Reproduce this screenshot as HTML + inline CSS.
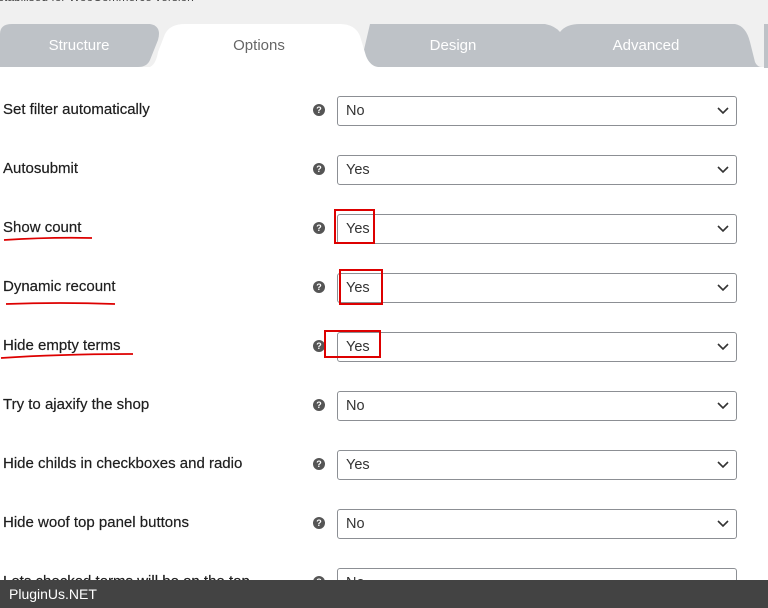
<!DOCTYPE html>
<html><head><meta charset="utf-8"><style>
body{margin:0;width:768px;height:608px;overflow:hidden;background:#fff;font-family:"Liberation Sans",sans-serif;position:relative}
.top{position:absolute;left:0;top:0;width:768px;height:67px;background:#f0f0f0}
.lbl{position:absolute;left:3px;font-size:15px;color:#1e1e1e;line-height:16px;-webkit-text-stroke:0.2px #1e1e1e}
.q{position:absolute;left:313px;width:12px;height:12px;border-radius:50%;background:#555;color:#fff;font-size:9px;font-weight:bold;text-align:center;line-height:12px}
.sel{position:absolute;left:337px;width:398px;height:28px;border:1px solid #8c8f94;border-radius:3px;background:#fff;font-size:14.5px;color:#333;line-height:28px;box-sizing:content-box}
.sel span{position:absolute;left:8px}
.sel svg{position:absolute;right:7px;top:10px}
.red{position:absolute;border:2px solid #d00;box-sizing:border-box}
.foot{position:absolute;left:0;top:580px;width:768px;height:28px;background:#434343;color:#fff;font-size:14px;line-height:28px;padding-left:9px;box-sizing:border-box}
</style></head><body>
<div class="top"></div>
<div style="position:absolute;left:-2px;top:-10px;font-size:12px;color:#444">stabilised for WooCommerce version</div>
<svg style="position:absolute;left:0;top:0" width="768" height="68">
<path d="M0 34 Q0 24 12 24 L150 24 Q162 26 158 40 L150 60 Q147 67 138 67 L0 67Z" fill="#bec2c7"/>
<path d="M370 24 L545 24 Q555 26 560 32 Q566 24 580 24 L735 24 Q746 26 750 42 L755 62 Q757 67 762 67 L360 67Z" fill="#bec2c7"/>
<rect x="764" y="24" width="4" height="44" fill="#bec2c7"/>
<path d="M150 67 Q156 64 158 52 L165 34 Q170 24 185 24 L340 24 Q355 24 360 36 L366 56 Q370 66 378 67Z" fill="#fff"/>
<text x="79" y="50" fill="#fff" font-size="15" text-anchor="middle" font-family="Liberation Sans">Structure</text>
<text x="259" y="50" fill="#666" font-size="15" text-anchor="middle" font-family="Liberation Sans">Options</text>
<text x="453" y="50" fill="#fff" font-size="15" text-anchor="middle" font-family="Liberation Sans">Design</text>
<text x="646" y="50" fill="#fff" font-size="15" text-anchor="middle" font-family="Liberation Sans">Advanced</text>
</svg>

<div class="lbl" style="top:102px">Set filter automatically</div><div class="q" style="top:104px">?</div><div class="sel" style="top:96px"><span>No</span><svg width="12" height="8"><path d="M1 1 L6 6 L11 1" stroke="#333" stroke-width="1.6" fill="none"/></svg></div>
<div class="lbl" style="top:161px">Autosubmit</div><div class="q" style="top:163px">?</div><div class="sel" style="top:155px"><span>Yes</span><svg width="12" height="8"><path d="M1 1 L6 6 L11 1" stroke="#333" stroke-width="1.6" fill="none"/></svg></div>
<div class="lbl" style="top:220px">Show count</div><div class="q" style="top:222px">?</div><div class="sel" style="top:214px"><span>Yes</span><svg width="12" height="8"><path d="M1 1 L6 6 L11 1" stroke="#333" stroke-width="1.6" fill="none"/></svg></div>
<div class="lbl" style="top:279px">Dynamic recount</div><div class="q" style="top:281px">?</div><div class="sel" style="top:273px"><span>Yes</span><svg width="12" height="8"><path d="M1 1 L6 6 L11 1" stroke="#333" stroke-width="1.6" fill="none"/></svg></div>
<div class="lbl" style="top:338px">Hide empty terms</div><div class="q" style="top:340px">?</div><div class="sel" style="top:332px"><span>Yes</span><svg width="12" height="8"><path d="M1 1 L6 6 L11 1" stroke="#333" stroke-width="1.6" fill="none"/></svg></div>
<div class="lbl" style="top:397px">Try to ajaxify the shop</div><div class="q" style="top:399px">?</div><div class="sel" style="top:391px"><span>No</span><svg width="12" height="8"><path d="M1 1 L6 6 L11 1" stroke="#333" stroke-width="1.6" fill="none"/></svg></div>
<div class="lbl" style="top:456px">Hide childs in checkboxes and radio</div><div class="q" style="top:458px">?</div><div class="sel" style="top:450px"><span>Yes</span><svg width="12" height="8"><path d="M1 1 L6 6 L11 1" stroke="#333" stroke-width="1.6" fill="none"/></svg></div>
<div class="lbl" style="top:515px">Hide woof top panel buttons</div><div class="q" style="top:517px">?</div><div class="sel" style="top:509px"><span>No</span><svg width="12" height="8"><path d="M1 1 L6 6 L11 1" stroke="#333" stroke-width="1.6" fill="none"/></svg></div>
<div class="lbl" style="top:574px">Lets checked terms will be on the top</div><div class="q" style="top:576px">?</div><div class="sel" style="top:568px"><span>No</span></div>

<svg style="position:absolute;left:0;top:0" width="768" height="608">
<path d="M4 240 Q50 237 92 238" stroke="#d00" stroke-width="1.8" fill="none"/>
<path d="M6 304 Q60 302 115 304" stroke="#d00" stroke-width="1.8" fill="none"/>
<path d="M1 358 Q60 354 133 354" stroke="#d00" stroke-width="1.8" fill="none"/>
</svg>
<div class="red" style="left:334px;top:209px;width:41px;height:35px"></div>
<div class="red" style="left:339px;top:269px;width:44px;height:36px"></div>
<div class="red" style="left:324px;top:330px;width:57px;height:28px"></div>

<div class="foot">PluginUs.NET</div>
</body></html>
